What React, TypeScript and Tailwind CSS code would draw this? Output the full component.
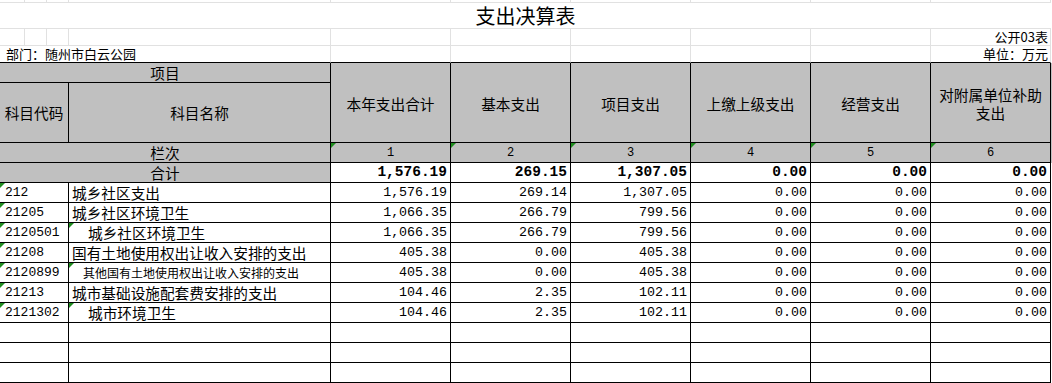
import React from "react";

const COLS = "grid grid-cols-[69px_262px_120px_120px_120px_120px_120px_120px]";
const TOP_COLS =
  "grid grid-cols-[25px_22px_22px_262px_120px_120px_120px_120px_120px_120px]";
const CJK = "font-['Noto_Sans_CJK_SC',sans-serif]";
const NUM = "font-['Liberation_Mono',monospace]";

type Row = {
  code: string;
  name: string;
  indent?: boolean;
  small?: boolean;
  nameMark?: boolean;
  vals: string[];
};

const zeros = ["0.00", "0.00", "0.00"];

const rows: Row[] = [
  { code: "212", name: "城乡社区支出", vals: ["1,576.19", "269.14", "1,307.05", ...zeros] },
  { code: "21205", name: "城乡社区环境卫生", vals: ["1,066.35", "266.79", "799.56", ...zeros] },
  {
    code: "2120501",
    name: "城乡社区环境卫生",
    indent: true,
    nameMark: true,
    vals: ["1,066.35", "266.79", "799.56", ...zeros],
  },
  { code: "21208", name: "国有土地使用权出让收入安排的支出", vals: ["405.38", "0.00", "405.38", ...zeros] },
  {
    code: "2120899",
    name: "其他国有土地使用权出让收入安排的支出",
    indent: true,
    small: true,
    nameMark: true,
    vals: ["405.38", "0.00", "405.38", ...zeros],
  },
  { code: "21213", name: "城市基础设施配套费安排的支出", vals: ["104.46", "2.35", "102.11", ...zeros] },
  {
    code: "2121302",
    name: "城市环境卫生",
    indent: true,
    nameMark: true,
    vals: ["104.46", "2.35", "102.11", ...zeros],
  },
];

const headers = ["本年支出合计", "基本支出", "项目支出", "上缴上级支出", "经营支出", "对附属单位补助支出"];
const totals = ["1,576.19", "269.15", "1,307.05", "0.00", "0.00", "0.00"];

// little green "number stored as text" flag in a cell's corner
function Mark() {
  return (
    <span className="absolute left-0 top-0 w-0 h-0 border-t-[5px] border-t-[#1e8c1e] border-r-[5px] border-r-transparent" />
  );
}

const cell = "relative border-r border-b border-black h-[20px] flex items-center";
const grid = "border-r border-b border-[#e1e1e1]";

export default function App() {
  return (
    <div className={`w-[1052px] h-[383px] overflow-hidden bg-white text-black ${CJK}`}>
      {/* sheet area above the table */}
      <div className={TOP_COLS}>
        {Array.from({ length: 10 }).map((_, i) => (
          <div key={i} className={`h-[3px] ${grid}`} />
        ))}
        <div className="col-span-10 h-[26px] border-b border-[#e1e1e1] flex items-end justify-center text-[20px] leading-[24px]">
          支出决算表
        </div>
        {Array.from({ length: 9 }).map((_, i) => (
          <div key={i} className={`h-[17px] ${grid}`} />
        ))}
        <div className={`h-[17px] ${grid} flex items-end justify-end pr-[2px] text-[13px] leading-[16px]`}>
          公开03表
        </div>
        <div className="col-span-4 h-[17px] border-r border-b border-r-[#e1e1e1] border-b-black flex items-end pl-[6px] text-[13px] leading-[16px]">
          部门：随州市白云公园
        </div>
        {Array.from({ length: 5 }).map((_, i) => (
          <div key={i} className="h-[17px] border-r border-b border-r-[#e1e1e1] border-b-black" />
        ))}
        <div className="h-[17px] border-r border-b border-r-[#e1e1e1] border-b-black flex items-end justify-end pr-[2px] text-[13px] leading-[16px]">
          单位：万元
        </div>
      </div>

      {/* table header */}
      <div className={`${COLS} grid-rows-[20px_60px] bg-[#c0c0c0] text-[14.67px]`}>
        <div className="col-span-2 border-r border-b border-black flex items-center justify-center">
          项目
        </div>
        {headers.map((h) => (
          <div
            key={h}
            className="row-span-2 border-r border-b border-black flex items-center justify-center text-center px-[6px] leading-[18px] pt-[2px]"
          >
            {h}
          </div>
        ))}
        <div className="border-r border-b border-black flex items-center justify-center">科目代码</div>
        <div className="border-r border-b border-black flex items-center justify-center">科目名称</div>
      </div>

      {/* 栏次 */}
      <div className={`${COLS} bg-[#c0c0c0]`}>
        <div className={`${cell} col-span-2 justify-center text-[14.67px]`}>栏次</div>
        {[1, 2, 3, 4, 5, 6].map((n) => (
          <div key={n} className={`${cell} justify-center ${NUM} text-[12px]`}>
            <Mark />
            {n}
          </div>
        ))}
      </div>

      {/* 合计 */}
      <div className={COLS}>
        <div className={`${cell} col-span-2 justify-center bg-[#c0c0c0] text-[14.67px]`}>合计</div>
        {totals.map((v, i) => (
          <div key={i} className={`${cell} justify-end pr-[3px] ${NUM} font-bold text-[14.5px]`}>
            {v}
          </div>
        ))}
      </div>

      {rows.map((r) => (
        <div key={r.code} className={COLS}>
          <div className={`${cell} pl-[5px] ${NUM} text-[13px]`}>
            <Mark />
            {r.code}
          </div>
          <div
            className={`${cell} whitespace-nowrap ${r.indent ? (r.small ? "pl-[14px]" : "pl-[19px]") : "pl-[3px]"} ${
              r.small ? "text-[12px]" : "text-[14.67px]"
            }`}
          >
            {r.nameMark && <Mark />}
            {r.name}
          </div>
          {r.vals.map((v, i) => (
            <div key={i} className={`${cell} justify-end pr-[3px] ${NUM} text-[13.3px]`}>
              {v}
            </div>
          ))}
        </div>
      ))}

      {[0, 1, 2].map((i) => (
        <div key={i} className={COLS}>
          {Array.from({ length: 8 }).map((_, j) => (
            <div key={j} className={cell} />
          ))}
        </div>
      ))}
    </div>
  );
}
